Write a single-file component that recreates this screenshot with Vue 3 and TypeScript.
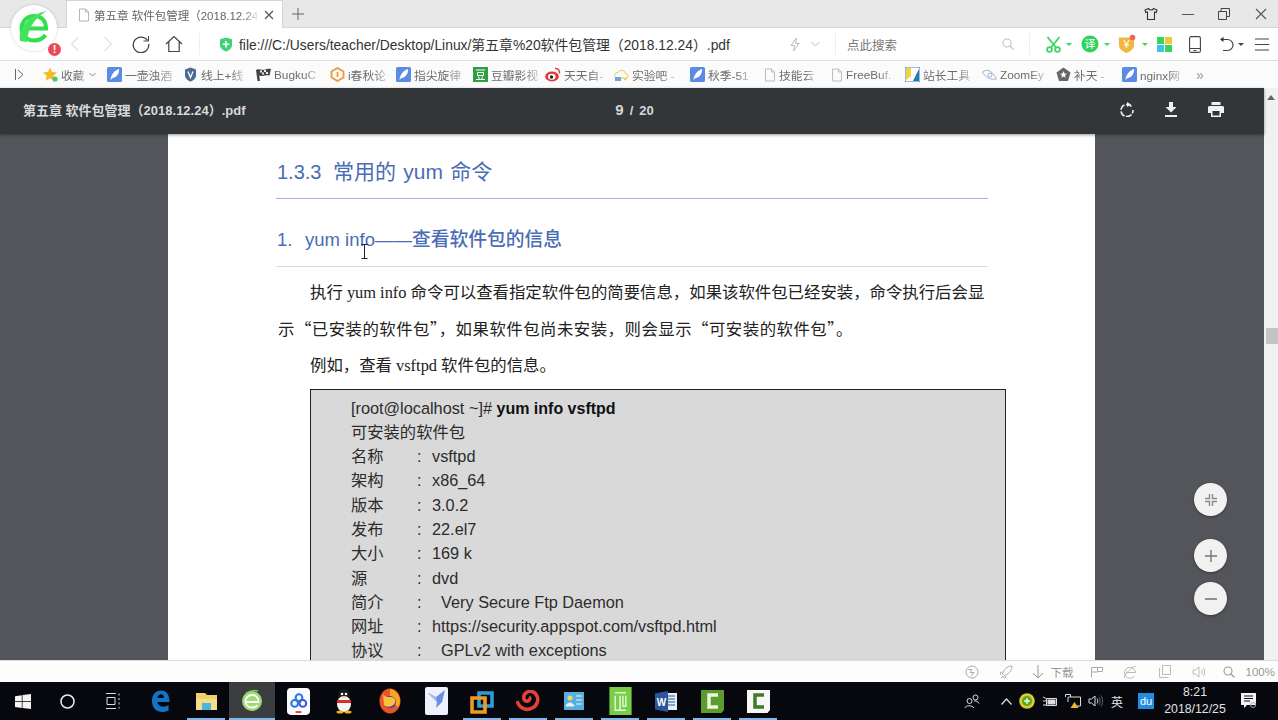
<script setup lang="ts">
type Bookmark = { label: string; icon: string; width: number }
type CodeRow = { label: string; value: string }

const bookmarks: Bookmark[] = [
  { label: "收藏", icon: "star", width: 64 },
  { label: "一壶浊酒", icon: "feather", width: 76 },
  { label: "线上+线", icon: "shield", width: 73 },
  { label: "BugkuC", icon: "flag", width: 74 },
  { label: "i春秋论", icon: "hex", width: 66 },
  { label: "指尖旋律", icon: "feather", width: 77 },
  { label: "豆瓣影视", icon: "douban", width: 72 },
  { label: "天天自-", icon: "weibo", width: 69 },
  { label: "实验吧 -", icon: "cloud", width: 76 },
  { label: "秋季-51", icon: "feather", width: 74 },
  { label: "技能云", icon: "doc", width: 67 },
  { label: "FreeBuf.", icon: "doc", width: 74 },
  { label: "站长工具", icon: "tool", width: 77 },
  { label: "ZoomEy", icon: "eye", width: 74 },
  { label: "补天 -", icon: "pent", width: 66 },
  { label: "nginx网", icon: "feather", width: 66 },
]

const codeRows: CodeRow[] = [
  { label: "名称", value: "vsftpd" },
  { label: "架构", value: "x86_64" },
  { label: "版本", value: "3.0.2" },
  { label: "发布", value: "22.el7" },
  { label: "大小", value: "169 k" },
  { label: "源", value: "dvd" },
  { label: "简介", value: "  Very Secure Ftp Daemon" },
  { label: "网址", value: "https://security.appspot.com/vsftpd.html" },
  { label: "协议", value: "  GPLv2 with exceptions" },
]
</script>

<template>
  <div class="browser">
    <header class="tabstrip">
      <div class="tab">
        <svg width="12" height="14" viewBox="0 0 12 14" fill="none" stroke="#b5b5b5"><path d="M1.500 1h6l3 3v9h-9zM7.500 1v3h3" /></svg>
        <span class="tab-title">第五章 软件包管理（2018.12.24</span>
        <svg width="10" height="10" viewBox="0 0 10 10" stroke="#555" stroke-width="1.200"><path d="M1 1l8 8M9 1l-8 8" /></svg>
      </div>
      <svg class="new-tab" width="12" height="12" viewBox="0 0 12 12" stroke="#666"><path d="M6 0v12M0 6h12" /></svg>
      <div class="window-controls">
        <svg width="14" height="14" viewBox="0 0 14 14" fill="none" stroke="#333" stroke-width="1.100"><path d="M4.500 1.500L1 3l.8 2.500 1.700-.5v7.500h7V5l1.700.5L13 3 9.500 1.500C9 3.500 5 3.500 4.500 1.500z" /></svg>
        <svg width="12" height="12" viewBox="0 0 12 12" stroke="#555"><path d="M0 6.500h12" /></svg>
        <svg width="12" height="12" viewBox="0 0 12 12" fill="none" stroke="#444"><path d="M.5 3.500h8v8h-8zM3 3.500V.5h8.500v8h-3" /></svg>
        <svg class="win-close" width="12" height="12" viewBox="0 0 12 12" stroke="#555" stroke-width="1.100"><path d="M1 1l10 10M11 1L1 11" /></svg>
      </div>
    </header>

    <nav class="toolbar">
      <div class="nav-btn">
        <svg width="10" height="16" viewBox="0 0 10 16" fill="none" stroke="#e3e3e3" stroke-width="1.400"><path d="M8.500 1L1.500 8l7 7" /></svg>
      </div>
      <div class="nav-btn">
        <svg width="10" height="16" viewBox="0 0 10 16" fill="none" stroke="#e3e3e3" stroke-width="1.400"><path d="M1.500 1l7 7-7 7" /></svg>
      </div>
      <div class="nav-btn">
        <svg width="18" height="18" viewBox="0 0 18 18" fill="none" stroke="#444" stroke-width="1.300"><path d="M15.500 5.500A7.800 7.800 0 1 0 16.800 9" /><path d="M16.500 1v5h-5" stroke-width="1" /></svg>
      </div>
      <div class="nav-btn">
        <svg width="18" height="18" viewBox="0 0 18 18" fill="none" stroke="#444" stroke-width="1.200"><path d="M1 9l8-7.500L17 9M3.800 7v9.500h10.400V7" /></svg>
      </div>
      <span class="vsep" />
      <svg class="addr-shield" width="14" height="15" viewBox="0 0 14 15"><path d="M7 .5l6 1.800v5.700c0 3.300-2.800 5.500-6 6.500-3.200-1-6-3.200-6-6.500V2.300z" fill="#3fd07a" /><path d="M7 4v6.500M3.800 7.200h6.400" stroke="#fff" stroke-width="1.600" /></svg>
      <span class="address">file:///C:/Users/teacher/Desktop/Linux/第五章%20软件包管理（2018.12.24）.pdf</span>
      <svg class="bolt" width="12" height="15" viewBox="0 0 12 15" fill="none" stroke="#b9b9b9"><path d="M7.500 1L2 8.500h3.500L4.500 14 10 6.500H6.500z" /></svg>
      <svg class="chev" width="9" height="6" viewBox="0 0 9 6" fill="none" stroke="#b9b9b9"><path d="M.5 1l4 4 4-4" /></svg>
      <span class="vsep search-sep" />
      <span class="search-text">点此搜索</span>
      <svg class="search-icon" width="12" height="12" viewBox="0 0 12 12" fill="none" stroke="#c0c0c0" stroke-width="1.100"><circle cx="5" cy="5" r="4" /><path d="M8 8l3.500 3.500" /></svg>
      <span class="vsep tools-sep" />
      <div class="tools">
        <svg width="15" height="17" viewBox="0 0 15 17" fill="none" stroke="#3ed65c" stroke-width="1.800"><circle cx="3.500" cy="13.500" r="2.400" /><circle cx="11.500" cy="13.500" r="2.400" /><path d="M1.500 1l8.500 10.500M13.500 1L5 11.500" /></svg>
        <i class="caret green" />
        <svg class="t-circle" width="18" height="18" viewBox="0 0 18 18"><circle cx="9" cy="9" r="8.500" fill="#2fd35c" /><text x="9" y="13" text-anchor="middle" font-size="11" fill="#fff" font-family="Noto Sans CJK SC, sans-serif">译</text></svg>
        <i class="caret green" />
        <svg class="t-shield" width="19" height="20" viewBox="0 0 19 20"><path d="M1 3.500h15v8c0 3.500-4 6-7.500 7.500C5 17.500 1 15 1 11.500z" fill="#f3b63c" /><text x="8.500" y="14" text-anchor="middle" font-size="11" fill="#fff" font-family="Liberation Sans, sans-serif">¥</text><circle cx="14.500" cy="3.500" r="2.800" fill="#f0625f" /></svg>
        <i class="caret green" />
        <svg class="t-grid" width="15" height="15" viewBox="0 0 15 15"><rect width="7" height="7" fill="#35d45d" /><rect x="8" width="7" height="7" fill="#f6c33d" /><rect y="8" width="7" height="7" fill="#41c3e3" /><rect x="8" y="8" width="7" height="7" fill="#35d45d" /></svg>
        <svg class="t-tablet" width="12" height="17" viewBox="0 0 12 17" fill="none" stroke="#444" stroke-width="1.100"><rect x=".6" y=".6" width="10.800" height="15.800" rx="1.500" /><path d="M.6 12.500h10.800M4.500 14.500h3" /></svg>
        <svg class="t-undo" width="15" height="16" viewBox="0 0 15 16" fill="none" stroke="#444" stroke-width="1.200"><path d="M2 3.500h6.500a5.500 5.500 0 0 1 0 11H4" /><path d="M4.500 .8L1 3.500l3.500 2.500" fill="#333" stroke="none" /></svg>
        <i class="caret dark" />
        <svg class="t-menu" width="14" height="13" viewBox="0 0 14 13" stroke="#444" stroke-width="1.100"><path d="M0 1h14M0 6.500h14M0 12h14" /></svg>
      </div>
    </nav>

    <nav class="bookmarks">
      <div class="bm-toggle">
        <svg width="9" height="11" viewBox="0 0 9 11" fill="none" stroke="#666"><path d="M.5 0v11M3 1l5 4.500L3 10" /></svg>
      </div>
      <div v-for="b in bookmarks" :key="b.label" class="bm" :style="{ width: b.width + 'px' }">
        <svg v-if="b.icon === 'star'" width="15" height="15" viewBox="0 0 15 15"><path d="M7 .5l2 4.500 5 .5-3.700 3.300 1 4.900L7 11.300 2.700 13.700l1-4.900L0 5.500 5 5z" fill="#f7b924" /><circle cx="12" cy="12" r="2.600" fill="#47c965" /></svg>
        <svg v-else-if="b.icon === 'feather'" width="15" height="15" viewBox="0 0 15 15"><rect width="15" height="15" rx="1.500" fill="#5a8be6" /><path d="M3.500 13C4 8 7 3.500 12 2c.5 4-2 8.500-6.500 9z" fill="#fff" /></svg>
        <svg v-else-if="b.icon === 'shield'" width="15" height="15" viewBox="0 0 15 15"><path d="M7.500 .5l5.500 2v6c0 3-3 5.200-5.500 6-2.500-.8-5.500-3-5.500-6v-6z" fill="#4c6a94" /><path d="M5 4.500l2.500 6 2.500-6" fill="none" stroke="#fff" stroke-width="1.300" /></svg>
        <svg v-else-if="b.icon === 'flag'" width="15" height="15" viewBox="0 0 15 15"><path d="M1.500 14L0 3c3-2 6 1 9-.5 2-.8 4-1 6-.5l-1.500 6.500C10 7.500 7 10 3.200 8.500L4 14z" fill="#444" /><path d="M4 3.500h2v2H4zM8 3h2v2H8zM6 5.500h2v2H6zM10 5h2v2h-2z" fill="#eee" /></svg>
        <svg v-else-if="b.icon === 'hex'" width="15" height="15" viewBox="0 0 15 15" fill="none" stroke="#ee9a3a" stroke-width="1.800"><path d="M7.500 1L13.500 4.500v6L7.500 14 1.500 10.500v-6z" /><path d="M7.500 5v5" /></svg>
        <svg v-else-if="b.icon === 'douban'" width="15" height="15" viewBox="0 0 15 15"><rect width="15" height="15" fill="#2f9e44" /><path d="M3 3h9M4.500 5.500h6v3h-6zM3 12.500h9M5.500 9.500l1 3M9.500 9.500l-1 3" stroke="#fff" fill="none" /></svg>
        <svg v-else-if="b.icon === 'weibo'" width="16" height="15" viewBox="0 0 16 15"><ellipse cx="7" cy="9.500" rx="6.800" ry="5" fill="#e0393a" /><ellipse cx="6.800" cy="9.800" rx="3.800" ry="3" fill="#fff" /><circle cx="6.500" cy="10" r="1.700" fill="#222" /><path d="M10 1.500c3-.5 5 2 4.500 5" fill="none" stroke="#e0393a" stroke-width="1.400" /></svg>
        <svg v-else-if="b.icon === 'cloud'" width="15" height="14" viewBox="0 0 15 14"><path d="M2 10a3 3 0 0 1 2-5.500 4 4 0 0 1 7.500 1A2.500 2.500 0 0 1 13 10z" fill="none" stroke="#e8c94a" /><path d="M1 9h6v4H1z" fill="#6ca8e0" /><path d="M10 9.500l1 1.500 2-.5-1 2-2-.5z" fill="#f0d048" /></svg>
        <svg v-else-if="b.icon === 'doc'" width="12" height="14" viewBox="0 0 12 14" fill="none" stroke="#bcbcbc"><path d="M1.500 1h6l3 3v9h-9zM7.500 1v3h3" /></svg>
        <svg v-else-if="b.icon === 'tool'" width="15" height="15" viewBox="0 0 15 15"><rect width="15" height="15" fill="#fff" stroke="#2d7fb5" /><path d="M1 1h5v8L1 13z" fill="#f4d23f" /><path d="M14 2L8 14h6z" fill="#2379b5" /></svg>
        <svg v-else-if="b.icon === 'eye'" width="15" height="12" viewBox="0 0 15 12" fill="none" stroke="#9db4d4"><path d="M.5 3c4-3 9-2.500 14 7C9 11 4 9 .5 3z" /><circle cx="8" cy="6" r="2" /></svg>
        <svg v-else width="15" height="15" viewBox="0 0 15 15"><path d="M7.500 .5L14.500 5.500 12 14H3L.5 5.500z" fill="#666" /><path d="M7.500 4l1 2.500 2.500.2-2 1.600.700 2.500-2.200-1.300-2.200 1.300.700-2.500-2-1.600 2.500-.2z" fill="#fff" /></svg>
        <span class="bm-text">{{ b.label }}</span>
        <svg v-if="b.icon === 'star'" class="bm-chev" width="7" height="5" viewBox="0 0 7 5" fill="none" stroke="#888"><path d="M.5 1l3 3 3-3" /></svg>
      </div>
      <span class="bm-more">»</span>
    </nav>

    <main class="pdf">
      <div class="pdf-bar">
        <span class="pdf-title">第五章 软件包管理（2018.12.24）.pdf</span>
        <span class="pdf-pages"><b>9</b><i>/</i><em>20</em></span>
        <div class="pdf-actions">
          <svg width="14" height="15" viewBox="0 0 14 15" fill="none" stroke="#eee" stroke-width="1.600"><path d="M11.500 4.500A6 6 0 1 0 13 8" stroke-dasharray="6 1.500" /><path d="M7 0l4 2.500L7 5z" fill="#eee" stroke="none" /></svg>
          <svg width="14" height="15" viewBox="0 0 14 15"><path d="M5 0h4v5h3.500L7 10.500 1.500 5H5zM1 13h12v2H1z" fill="#f1f1f1" /></svg>
          <svg width="16" height="15" viewBox="0 0 16 15"><path d="M3.500 0h9v3h-9zM1.500 4h13A1.500 1.500 0 0 1 16 5.500V11h-3v4H3v-4H0V5.500A1.500 1.500 0 0 1 1.500 4z" fill="#f1f1f1" /><path d="M4.500 9h7v4.500h-7z" fill="#323639" /></svg>
        </div>
      </div>
      <div class="pdf-body">
        <div class="viewer">
          <article class="page">
            <h1 class="h1"><span class="h1-num">1.3.3</span>常用的 yum 命令</h1>
            <h2 class="h2"><span class="h2-num">1.</span>yum info——<span class="h2-cjk">查看软件包的信息</span></h2>
            <p class="para first">执行 yum info 命令可以查看指定软件包的简要信息，如果该软件包已经安装，命令执行后会显</p>
            <p class="para cjk">示“已安装的软件包”，如果软件包尚未安装，则会显示“可安装的软件包”。</p>
            <p class="para first">例如，查看 vsftpd 软件包的信息。</p>
            <section class="code">
              <div class="code-line">[root@localhost ~]# <b>yum info vsftpd</b></div>
              <div class="code-line">可安装的软件包</div>
              <div v-for="r in codeRows" :key="r.label" class="code-row">
                <span>{{ r.label }}</span>
                <span>:</span>
                <span class="code-value">{{ r.value }}</span>
              </div>
            </section>
          </article>
          <svg class="ibeam" width="7" height="15" viewBox="0 0 7 15" fill="none" stroke="#222"><path d="M.5.500h6M3.500.500v14M.5 14.500h6" /></svg>
          <div class="zoom-btns">
            <div class="zoom-btn fit">
              <svg width="12" height="12" viewBox="0 0 12 12" fill="none" stroke="#8a8a8a" stroke-width="1.400"><path d="M4.500 0v4.500H0M7.500 0v4.500H12M4.500 12V7.500H0M7.500 12V7.500H12" /></svg>
            </div>
            <div class="zoom-btn">
              <svg width="12" height="12" viewBox="0 0 12 12" stroke="#777" stroke-width="1.400"><path d="M6 0v12M0 6h12" /></svg>
            </div>
            <div class="zoom-btn">
              <svg width="12" height="12" viewBox="0 0 12 12" stroke="#777" stroke-width="1.600"><path d="M0 6h12" /></svg>
            </div>
          </div>
        </div>
        <aside class="scrollbar">
          <svg class="sb-up" width="8" height="5" viewBox="0 0 8 5"><path d="M4 0l4 5H0z" fill="#666" /></svg>
          <div class="sb-thumb" />
        </aside>
      </div>
    </main>

    <footer class="status">
      <svg width="14" height="14" viewBox="0 0 14 14" fill="none" stroke="#aaa"><circle cx="7" cy="7" r="6" /><path d="M3 4.500h4L5 7.500h4L6 11" /></svg>
      <svg class="s-rocket" width="14" height="14" viewBox="0 0 14 14" fill="none" stroke="#aaa"><path d="M13 1C8 1 4 5 3.500 9l1.500 1.500C9 10 13 6 13 1zM3 7L1 8l1 2M7 11l-1 2-2-1M2 13l2-2" /></svg>
      <svg class="s-down" width="12" height="14" viewBox="0 0 12 14" fill="none" stroke="#999"><path d="M6 0v13M1 8l5 5 5-5" /></svg>
      <span class="s-text">下载</span>
      <svg class="s-flag" width="12" height="12" viewBox="0 0 12 12" fill="none" stroke="#aaa"><path d="M.5 11.500V1.500h11v4h-5v-4M.5 6h6" /></svg>
      <svg width="14" height="14" viewBox="0 0 14 14" fill="none" stroke="#bbb"><path d="M3 7.500h9.500A5.500 5.500 0 1 0 11.500 11M1 13C3 7 8 3 13 1" /></svg>
      <svg class="s-win" width="12" height="13" viewBox="0 0 12 13" fill="none" stroke="#bbb"><path d="M3.500 9.500V.5h8v9zM.5 3v9.500h9" /></svg>
      <svg class="s-vol" width="13" height="14" viewBox="0 0 13 14" fill="none" stroke="#bbb"><path d="M1 5v4h2.500L7 12V2L3.500 5zM9.500 4.500c1 1.500 1 3.500 0 5M11.500 3c1.500 2.500 1.500 5.500 0 8" /></svg>
      <svg class="s-search" width="12" height="12" viewBox="0 0 12 12" fill="none" stroke="#999" stroke-width="1.100"><circle cx="5" cy="5" r="4" /><path d="M8 8l3.500 3.500" /></svg>
      <span class="s-text s-zoom">100%</span>
    </footer>

    <footer class="taskbar">
      <div class="task-cell sys">
        <svg width="16" height="15" viewBox="0 0 16 15" fill="#f4f4f4"><path d="M0 2.200l6.800-1v6H0zM7.500 1l8.500-1v7.200H7.500zM0 7.900h6.800v6L0 13zM7.500 7.900H16V15l-8.500-1.100z" /></svg>
      </div>
      <div class="task-cell sys">
        <svg width="15" height="15" viewBox="0 0 15 15" fill="none" stroke="#eee" stroke-width="1.500"><circle cx="7.500" cy="7.500" r="6.500" /></svg>
      </div>
      <div class="task-cell sys last">
        <svg width="16" height="16" viewBox="0 0 16 16" fill="none" stroke="#ddd"><path d="M1 .5h10M1 15.500h10M2 4.500h8v7H2zM14 .5v2M14 5v2M14 9.500v2M14 14v1.500" /></svg>
      </div>
      <div class="task-cell">
        <svg width="19" height="22" viewBox="0 0 19 22"><path d="M1 11C1 4 5 .5 10 .5c5.500 0 8.500 4 8.500 11.500H6.500c0 5 7 6 11 3v5.500c-7 3.500-16.500 1-16.500-9.500zM6.500 8h6.500c0-5-6-5-6.500 0z" fill="#1174c6" /></svg>
      </div>
      <div class="task-cell running">
        <svg width="21" height="21" viewBox="0 0 21 21"><path d="M0 2h9l2 2h10v15H0z" fill="#f2cf6d" /><path d="M0 8h21v11H0z" fill="#f7dc8a" /><path d="M6 12h9v7H6z" fill="#4db6d8" /></svg>
      </div>
      <div class="task-cell running active">
        <svg width="22" height="24" viewBox="0 0 22 24"><circle cx="11" cy="12" r="10" fill="#9edb77" /><path d="M4.500 13h13c0-4.500-2.500-7-6.500-7s-6.500 3-6.500 6.500 3 6 6.500 6c2.500 0 4.500-1 5.500-2.500" fill="none" stroke="#fff" stroke-width="1.800" /><path d="M5 4c4-2 9-3 12-2" fill="none" stroke="#6fce4c" stroke-width="1.500" /></svg>
      </div>
      <div class="task-cell">
        <svg width="23" height="27" viewBox="0 0 24 28"><rect width="24" height="28" rx="4" fill="#fbfbff" /><g fill="none" stroke-width="2.200"><circle cx="12.500" cy="10" r="3.500" stroke="#2b78e0" /><circle cx="8" cy="16" r="3.500" stroke="#2b78e0" /><circle cx="16.500" cy="16" r="3.500" stroke="#3b5fd0" /></g><path d="M9 25h6" stroke="#e0483a" stroke-width="2" /></svg>
      </div>
      <div class="task-cell">
        <svg width="20" height="26" viewBox="0 0 20 26"><ellipse cx="10" cy="8" rx="6" ry="7" fill="#1a1a1a" /><ellipse cx="10" cy="16" rx="7" ry="8" fill="#f4f4f4" /><path d="M3 12h14v3H3z" fill="#d92d20" /><circle cx="8" cy="6" r="1.300" fill="#fff" /><circle cx="12" cy="6" r="1.300" fill="#fff" /><path d="M8 8.500h4L10 10z" fill="#f2b21b" /><ellipse cx="6" cy="24" rx="3.500" ry="1.500" fill="#f2b21b" /><ellipse cx="14" cy="24" rx="3.500" ry="1.500" fill="#f2b21b" /></svg>
      </div>
      <div class="task-cell">
        <svg width="22" height="26" viewBox="0 0 22 26"><ellipse cx="11" cy="13" rx="10.500" ry="12.500" fill="#e9552a" /><path d="M11 1c6 1 10 6 10 12 0 2-.5 4-2 6L11 13z" fill="#f6a623" /><circle cx="11" cy="14" r="6" fill="#3d3aa8" /><path d="M4 6c2 4 6 3 9 3 3 1 4 4 3 6-2 4-8 5-11 2" fill="#f8c33c" /></svg>
      </div>
      <div class="task-cell">
        <svg width="23" height="28" viewBox="0 0 23 28"><rect width="23" height="28" rx="2" fill="#eef1fb" /><path d="M3 6l8 4L20 3l-3 12-6 6 1-6z" fill="#6a8ee8" /><path d="M3 6l8 4 1 5z" fill="#a9bdf1" /></svg>
      </div>
      <div class="task-cell running">
        <svg width="24" height="28" viewBox="0 0 24 28" fill="none" stroke-width="3.600"><path d="M9 6h13v13H9z" stroke="#2d9fd8" /><path d="M2 11h13v14H2z" stroke="#ef9b21" /></svg>
      </div>
      <div class="task-cell running">
        <svg width="24" height="22" viewBox="0 0 24 22"><path d="M1 11c3 8 10 10 15 7 5-2 7-8 5-12-2-5-8-6-11-3-3 2-3 7 0 8s5-3 3-4" fill="none" stroke="#e4413a" stroke-width="3.500" /></svg>
      </div>
      <div class="task-cell running">
        <svg width="20" height="18" viewBox="0 0 20 18"><rect width="20" height="18" fill="#59aee0" /><circle cx="6" cy="6" r="2.500" fill="#f3d56b" /><path d="M2 14c1-4 7-4 8 0zM12 4h6M12 8h6M12 12h6" fill="#e8f2fb" stroke="#e8f2fb" /></svg>
      </div>
      <div class="task-cell running">
        <svg width="23" height="28" viewBox="0 0 23 29"><rect width="23" height="29" fill="#76cf47" /><path d="M6 6h11M6 9v15h5V9M14 9v11h3V9M6 24h11" fill="none" stroke="#e8f7dc" stroke-width="1.500" /></svg>
      </div>
      <div class="task-cell running">
        <svg width="22" height="21" viewBox="0 0 22 21"><path d="M10 2h12v17H10z" fill="#e8eef8" /><path d="M13 5h7M13 8h7M13 11h7M13 14h7" stroke="#2b579a" /><path d="M0 2.500L13 0v21L0 18.500z" fill="#2b579a" /><text x="6.500" y="14.500" text-anchor="middle" font-size="10" font-weight="700" fill="#fff" font-family="Liberation Sans, sans-serif">W</text></svg>
      </div>
      <div class="task-cell running">
        <svg width="23" height="23" viewBox="0 0 23 23"><path d="M0 0h23v20l-2.500 3H0z" fill="#5c9c2e" /><path d="M17 5H8v12h9" fill="none" stroke="#e8f6da" stroke-width="3.500" /></svg>
      </div>
      <div class="task-cell running">
        <svg width="23" height="23" viewBox="0 0 23 23"><path d="M0 0h23v20l-2.500 3H0z" fill="#f7f7f7" /><path d="M17 5H8v12h9" fill="none" stroke="#3f7a25" stroke-width="3.500" /></svg>
      </div>

      <div class="tray">
        <svg class="tr-person" width="16" height="15" viewBox="0 0 16 15" fill="none" stroke="#ddd"><circle cx="5.500" cy="7" r="2.500" /><path d="M1 14c.500-3 7-3 9 0" /><circle cx="11.500" cy="3.500" r="2.500" /><path d="M10 7c2-.5 4 .5 5 2.500" /></svg>
        <svg class="tr-up" width="11" height="7" viewBox="0 0 11 7" fill="none" stroke="#ddd" stroke-width="1.300"><path d="M.5 6.500l5-5.500 5 5.500" /></svg>
        <svg class="tr-ic" width="16" height="16" viewBox="0 0 16 16"><circle cx="8" cy="8" r="7.800" fill="#e5c62a" /><circle cx="8" cy="8" r="5" fill="#4eaa2c" /><path d="M8 5v6M5 8h6" stroke="#f6f6c8" stroke-width="1.500" /></svg>
        <svg class="tr-ic" width="16" height="11" viewBox="0 0 16 11" fill="none" stroke="#ddd"><path d="M4.500 2.500h10v7h-10zM1 1l3 1.500M1 5h3.500M1 9h3.500" /><rect x="6" y="4" width="7" height="4" fill="#ddd" /></svg>
        <svg class="tr-ic" width="16" height="15" viewBox="0 0 16 15"><path d="M.5 3V.5h5V3M3 3v5" fill="none" stroke="#ddd" /><path d="M3.500 3h12v9h-6" fill="none" stroke="#ddd" /><path d="M9.500 8l4 6h-8z" fill="#e8b92d" /></svg>
        <svg class="tr-ic" width="15" height="14" viewBox="0 0 15 14" fill="none" stroke="#ddd"><path d="M1 5v4h2.500L7 12V2L3.500 5zM9 4.500c1 1.500 1 3.500 0 5" /><path d="M11 3c1.500 2.500 1.500 5.500 0 8M13 1.500c2 3 2 8 0 11" stroke="#666" /></svg>
        <span class="tr-ime">英</span>
        <span class="tr-du">du</span>
        <div class="tr-clock"><span>8:21</span><span>2018/12/25</span></div>
        <svg class="tr-notify" width="16" height="16" viewBox="0 0 16 16"><path d="M0 0h15v12H6l-3 3v-3H0z" fill="#f4f4f4" /><path d="M3 3h9M3 5.500h9M3 8h6" stroke="#111" /><circle cx="12" cy="12" r="2.500" fill="none" stroke="#aaa" /></svg>
      </div>
    </footer>

    <div class="logo">
      <svg width="46" height="46" viewBox="0 0 46 46" fill="none">
        <path d="M11 23.500h24C35 15 30 11 23 11c-7 0-12.500 5.500-12.500 12.500S16 35.500 23 35.500c5 0 9-2 11.500-5.500" stroke="#2fe04c" stroke-width="4" />
        <path d="M9 36C7 22 19 9 36 6c-9 5-19 14-20 31z" fill="#43e35e" />
      </svg>
      <span class="logo-badge">!</span>
    </div>
  </div>
</template>

<style>
html,
body {
  margin: 0;
  overflow: hidden;
}
</style>

<style scoped>
.browser {
  position: relative;
  display: flex;
  flex-direction: column;
  width: 1278px;
  height: 720px;
  overflow: hidden;
  font-family: "Liberation Sans", "Noto Sans CJK SC", sans-serif;
  background: #fff;
}

.tabstrip {
  display: flex;
  align-items: flex-end;
  height: 28px;
  flex: none;
  background: #e8e8e8;
  border-bottom: 1px solid #d6d6d6;
  box-sizing: border-box;
  padding-left: 66px;
}
.tab {
  display: flex;
  align-items: center;
  gap: 4px;
  width: 217px;
  height: 28px;
  margin-bottom: -1px;
  box-sizing: border-box;
  padding: 0 8px 0 11px;
  background: #fff;
  border: 1px solid #d6d6d6;
  border-bottom: none;
}
.tab-title {
  flex: 1;
  overflow: hidden;
  white-space: nowrap;
  font-size: 11.500px;
  color: #666;
  -webkit-mask-image: linear-gradient(to right, #000 90%, transparent);
  mask-image: linear-gradient(to right, #000 90%, transparent);
}
.new-tab {
  align-self: center;
  margin-left: 9px;
}
.window-controls {
  display: flex;
  align-items: center;
  gap: 24px;
  margin-left: auto;
  align-self: center;
  padding-right: 11px;
}
.win-close {
  margin-left: 1px;
}

.toolbar {
  display: flex;
  align-items: center;
  height: 33px;
  flex: none;
  box-sizing: border-box;
  padding-left: 58px;
  border-bottom: 1px solid #dcdcdc;
  background: #fff;
}
.nav-btn {
  display: flex;
  align-items: center;
  justify-content: center;
  width: 33px;
  height: 32px;
}
.vsep {
  width: 1px;
  height: 22px;
  background: #eee;
  margin-left: 9px;
}
.addr-shield {
  margin-left: 19px;
}
.address {
  width: 550px;
  margin-left: 6px;
  font-size: 13.850px;
  color: #333;
  white-space: nowrap;
}
.chev {
  margin-left: 10px;
}
.search-sep {
  margin-left: 15px;
}
.search-text {
  width: 155px;
  margin-left: 11px;
  font-size: 12.500px;
  color: #777;
}
.tools-sep {
  margin-left: 15px;
}
.tools {
  display: flex;
  align-items: center;
  margin-left: 16px;
}
.caret {
  width: 0;
  height: 0;
  margin-left: 5px;
  border-left: 3px solid transparent;
  border-right: 3px solid transparent;
  border-top: 3px solid #3ed65c;
}
.caret.dark {
  border-top-color: #444;
  margin-left: 4px;
}
.t-circle {
  margin-left: 9px;
}
.t-shield {
  margin-left: 8px;
}
.t-grid {
  margin-left: 9px;
}
.t-tablet {
  margin-left: 17px;
}
.t-undo {
  margin-left: 18px;
}
.t-menu {
  margin-left: 11px;
}

.bookmarks {
  display: flex;
  align-items: center;
  height: 27px;
  flex: none;
  background: #fbfbfb;
}
.bm-toggle {
  display: flex;
  width: 43px;
  padding-left: 15px;
  box-sizing: border-box;
}
.bm {
  display: flex;
  align-items: center;
  gap: 3px;
  flex: none;
  height: 27px;
}
.bm-text {
  flex: none;
  white-space: nowrap;
  font-size: 11.800px;
  color: #6d6d6d;
  -webkit-mask-image: linear-gradient(to right, #000 70%, rgba(0, 0, 0, 0.35));
  mask-image: linear-gradient(to right, #000 70%, rgba(0, 0, 0, 0.35));
}
.bm-chev {
  margin-left: 1px;
}
.bm-more {
  margin-left: 8px;
  font-size: 14px;
  color: #999;
}

.pdf {
  display: flex;
  flex-direction: column;
  flex: 1;
  min-height: 0;
}
.pdf-bar {
  position: relative;
  z-index: 1;
  display: grid;
  grid-template-columns: 1fr auto 1fr;
  align-items: center;
  height: 46px;
  flex: none;
  box-sizing: border-box;
  margin-right: 14px;
  padding: 0 40px 4px 23px;
  background: #323639;
  box-shadow: 0 1px 3px rgba(0, 0, 0, 0.4);
  color: #f1f1f1;
}
.pdf-title {
  font-size: 13px;
  font-weight: 700;
  color: #d9d9d9;
  white-space: nowrap;
}
.pdf-pages {
  display: flex;
  align-items: baseline;
  gap: 6px;
  margin-left: 22px;
  color: #d6d6d6;
  font-weight: 700;
}
.pdf-pages b {
  font-size: 15px;
}
.pdf-pages i {
  font-size: 13px;
  font-style: normal;
}
.pdf-pages em {
  font-size: 13px;
  font-style: normal;
}
.pdf-actions {
  display: flex;
  align-items: center;
  justify-content: flex-end;
  gap: 30px;
}

.pdf-body {
  display: flex;
  flex: 1;
  min-height: 0;
  margin-top: -46px;
}
.viewer {
  position: relative;
  display: flex;
  justify-content: center;
  flex: 1;
  padding-top: 46px;
  overflow: hidden;
  background: #54555a;
}
.page {
  width: 927px;
  flex: none;
  box-sizing: border-box;
  margin-right: 1px;
  padding: 21px 107px 0 108px;
  background: #fff;
}
.h1 {
  margin: 0;
  padding: 0 0 9px 1px;
  font-size: 21px;
  line-height: 34px;
  font-weight: 400;
  word-spacing: 1.500px;
  color: #4a6cb5;
  border-bottom: 1px solid #a9b2d8;
}
.h1-num {
  display: inline-block;
  width: 56px;
  font-size: 20px;
}
.h2 {
  margin: 26px 0 0;
  padding: 0 0 11px 1px;
  font-size: 18.500px;
  line-height: 30px;
  font-weight: 400;
  color: #4a6cb5;
  border-bottom: 1px solid #d9d9d9;
}
.h2-num {
  display: inline-block;
  width: 28px;
}
.h2-cjk {
  font-size: 18.750px;
  font-weight: 500;
}
.para {
  margin: 0;
  padding-left: 2px;
  font-family: "Liberation Serif", "Noto Sans CJK SC", serif;
  font-size: 16.400px;
  line-height: 36.500px;
  color: #222;
  white-space: nowrap;
}
.h2 + .para {
  margin-top: 8px;
}
.para.first {
  padding-left: 34px;
}
.para.cjk {
  margin: -2px 0 2px;
  font-family: "Noto Sans CJK SC", sans-serif;
  letter-spacing: 0.5px;
}
.code {
  width: 696px;
  margin: 4px 0 0 34px;
  box-sizing: border-box;
  padding: 6px 0 0 40px;
  height: 300px;
  background: #d9d9d9;
  border: 1px solid #222;
  font-size: 16.300px;
  line-height: 24.300px;
  color: #2c2c2c;
}
.code-line b {
  font-size: 16px;
  line-height: 1;
  color: #111;
}
.code-row {
  display: grid;
  grid-template-columns: 66px 15px 1fr;
}
.code-value {
  white-space: pre;
}
.ibeam {
  position: absolute;
  left: 361px;
  top: 156px;
}
.zoom-btns {
  position: absolute;
  left: 1194px;
  top: 395px;
  display: flex;
  flex-direction: column;
  gap: 10px;
}
.zoom-btn {
  display: flex;
  align-items: center;
  justify-content: center;
  width: 33px;
  height: 33px;
  border-radius: 50%;
  background: #f1f1f1;
  box-shadow: 0 1px 3px rgba(0, 0, 0, 0.35);
}
.zoom-btn.fit {
  margin-bottom: 13px;
}
.scrollbar {
  display: flex;
  flex-direction: column;
  align-items: center;
  width: 14px;
  flex: none;
  background: #f1f1f1;
}
.sb-up {
  margin-top: 7px;
}
.sb-thumb {
  width: 12px;
  height: 16px;
  margin: 228px 0 0 2px;
  background: #c4c4c4;
}

.status {
  display: flex;
  align-items: center;
  justify-content: flex-end;
  gap: 20px;
  height: 22px;
  flex: none;
  padding-right: 3px;
  box-sizing: border-box;
  border-top: 1px solid #dcdcdc;
  background: #fdfdfd;
}
.s-text {
  font-size: 11.500px;
  color: #999;
}
.s-down {
  margin: 0 -13px 0 -1px;
}
.s-zoom {
  margin-left: -9px;
}
.s-flag {
  margin-left: -3px;
}
.s-win {
  margin-left: 2px;
}
.s-vol {
  margin-left: 1px;
}
.s-search {
  margin-left: -2px;
}

.taskbar {
  display: flex;
  height: 38px;
  flex: none;
  background: #06080e;
}
.task-cell {
  position: relative;
  display: flex;
  align-items: center;
  justify-content: center;
  flex: none;
  width: 46px;
  height: 38px;
}
.task-cell.sys {
  width: 45px;
}
.task-cell.last {
  margin-right: 2px;
}
.task-cell.running::after {
  content: "";
  position: absolute;
  left: 4px;
  right: 4px;
  bottom: 0;
  height: 2px;
  background: #7fb8ea;
}
.task-cell.active {
  background: #3b3d40;
}
.task-cell.active::after {
  left: 0;
  right: 0;
}
.tray {
  display: flex;
  align-items: center;
  margin-left: auto;
  padding-right: 21px;
  color: #e2e2e2;
}
.tr-up {
  margin-left: 21px;
}
.tr-ic {
  margin-left: 7px;
}
.tr-ime {
  margin-left: 8px;
  font-size: 12px;
}
.tr-du {
  display: flex;
  align-items: center;
  justify-content: center;
  width: 16px;
  height: 16px;
  margin-left: 15px;
  background: #1f8de0;
  color: #fff;
  font-size: 11px;
}
.tr-clock {
  display: flex;
  flex-direction: column;
  align-items: center;
  width: 62px;
  margin-left: 10px;
  font-size: 12.300px;
  line-height: 17px;
}
.tr-notify {
  margin-left: 15px;
}

.logo {
  position: absolute;
  left: 11px;
  top: 5px;
  width: 46px;
  height: 46px;
  border-radius: 50%;
  background: #fff;
  box-shadow: 0 0 3px rgba(0, 0, 0, 0.18);
}
.logo-badge {
  position: absolute;
  left: 37px;
  top: 38px;
  width: 13px;
  height: 13px;
  border-radius: 50%;
  background: #e9485a;
  color: #fff;
  font-size: 11px;
  font-weight: 700;
  line-height: 13px;
  text-align: center;
}
</style>
